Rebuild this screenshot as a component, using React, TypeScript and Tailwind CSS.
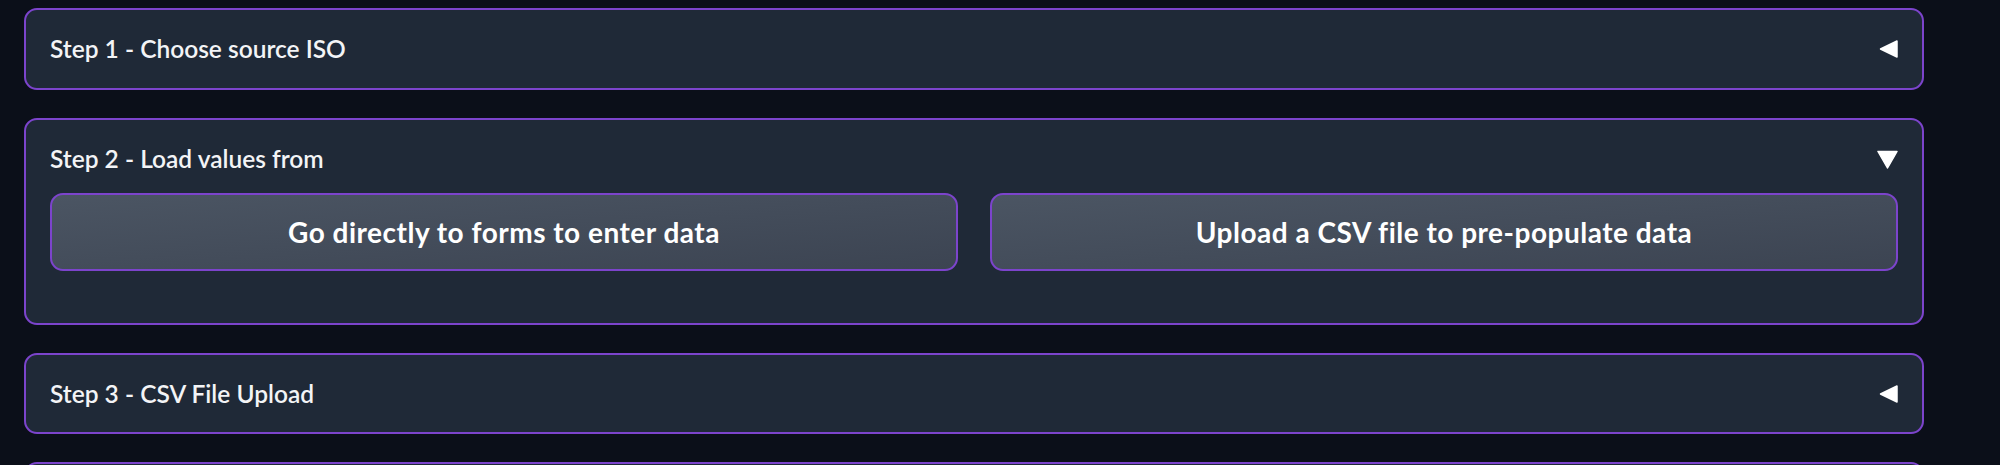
import React, { useState } from "react";

const FONT = { fontFamily: "Lato, 'Noto Sans', sans-serif" };

const Caret: React.FC<{ open: boolean }> = ({ open }) =>
  open ? (
    <svg width="21" height="19" viewBox="0 0 21 19" className="shrink-0">
      <path d="M1 1.5 L20 1.5 L10.5 18 Z" fill="#ffffff" stroke="#ffffff" strokeWidth="1.5" strokeLinejoin="round" />
    </svg>
  ) : (
    <svg width="19" height="18" viewBox="0 0 19 18" className="shrink-0">
      <path d="M18 1 L18 17 L1.5 9 Z" fill="#ffffff" stroke="#ffffff" strokeWidth="1.5" strokeLinejoin="round" />
    </svg>
  );

type StepProps = {
  title?: string;
  open?: boolean;
  h: string;
  children?: React.ReactNode;
};

const Step: React.FC<StepProps> = ({ title, open = false, h, children }) => (
  <div className={`${h} shrink-0 rounded-[13px] border-2 border-[#7c44cc] bg-[#1f2937] px-[24px] pt-[26px]`}>
    {title && (
      <button className="flex h-[26px] w-full items-center justify-between text-left">
        <span className="text-[24.5px] font-semibold text-[#f3f4f6]">{title}</span>
        <Caret open={open} />
      </button>
    )}
    {open && children}
  </div>
);

const App: React.FC = () => {
  const [mode, setMode] = useState<string | null>(null);

  return (
    <main className="min-h-screen overflow-hidden bg-[#0b0f19] pl-[24px] pt-[8px]" style={FONT}>
      <div className="flex w-[1900px] flex-col gap-[28px]">
        <Step title="Step 1 - Choose source ISO" h="h-[82px]" />

        <Step title="Step 2 - Load values from" h="h-[207px]" open>
          <div className="mt-[21px] grid grid-cols-2 gap-[32px]">
            {["Go directly to forms to enter data", "Upload a CSV file to pre-populate data"].map((label) => (
              <button
                key={label}
                onClick={() => setMode(label)}
                className={`h-[78px] rounded-[13px] border-2 border-[#7c44cc] bg-gradient-to-br from-[#4b5563] to-[#3c4452] text-[28px] font-bold tracking-[0.5px] text-white ${
                  mode === label ? "brightness-110" : ""
                }`}
              >
                {label}
              </button>
            ))}
          </div>
        </Step>

        <Step title="Step 3 - CSV File Upload" h="h-[81px]" />

        {/* next step, only its top edge shows */}
        <Step h="h-[82px]" />
      </div>
    </main>
  );
};

export default App;
